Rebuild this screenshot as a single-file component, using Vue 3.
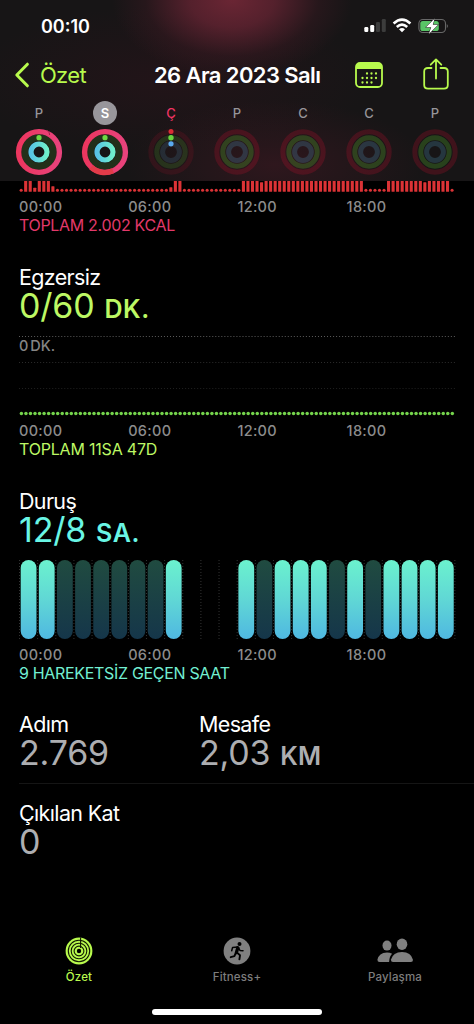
<template>
  <div class="screen">
    <header class="header">
      <div class="status">
        <span class="clock">00:10</span>
        <svg class="status-icons" width="86" height="20" viewBox="0 0 86 20">
          <rect x="0.3" y="11" width="4" height="5" rx="1.2" fill="#fff" />
          <rect x="6.2" y="9" width="4" height="7" rx="1.2" fill="#fff" />
          <rect x="12" y="6" width="4" height="10" rx="1.2" fill="#3c3c3c" />
          <rect x="17.8" y="3" width="4" height="13" rx="1.2" fill="#3c3c3c" />
          <g fill="none" stroke="#fff" stroke-width="2.6">
            <path d="M29.6 7.5 Q38 -0.2 46.4 7.5" />
            <path d="M32.8 11 Q38 6.3 43.2 11" />
          </g>
          <path d="M35 13.2 Q38 10.6 41 13.2 L38 16.2 Z" fill="#fff" />
          <rect x="54.9" y="3.5" width="26.6" height="13" rx="4" fill="none" stroke="#686868" stroke-width="1.1" />
          <path d="M82.8 7.9 Q84.7 10 82.8 12.1 Z" fill="#777" />
          <rect x="56.3" y="5" width="18.5" height="10" rx="2.6" fill="#59c466" />
          <path d="M70.7 2.5 L61.8 11.2 H67.2 L64.8 18 L74.2 8.8 H68.8 Z" fill="#fff" stroke="#1b1b1b" stroke-width="1" paint-order="stroke" />
        </svg>
      </div>

      <nav class="nav">
        <div class="back">
          <svg width="16" height="26" viewBox="0 0 16 26">
            <path d="M13.4 2.2 L2.8 13 L13.4 23.8" fill="none" stroke="#b8fa4d" stroke-width="3" stroke-linecap="round" stroke-linejoin="round" />
          </svg>
          <span>Özet</span>
        </div>
        <h1>26 Ara 2023 Salı</h1>
        <svg class="calendar" width="28" height="26" viewBox="0 0 28 26">
          <rect x="1" y="1" width="26" height="24" rx="4" fill="none" stroke="#b8fa4d" stroke-width="1.8" />
          <path d="M1 7 V5 Q1 1 5 1 H23 Q27 1 27 5 V7 Z" fill="#b8fa4d" />
          <circle v-for="d in calendarDots" :key="d.join()" :cx="d[0]" :cy="d[1]" r="1.15" fill="#b8fa4d" />
        </svg>
        <svg class="share" width="26" height="32" viewBox="0 0 26 32" fill="none" stroke="#b8fa4d" stroke-width="1.8" stroke-linecap="round" stroke-linejoin="round">
          <path d="M8.5 10 H5 Q1.2 10 1.2 13.6 V27 Q1.2 30.6 5 30.6 H21 Q24.8 30.6 24.8 27 V13.6 Q24.8 10 21 10 H17.5" />
          <path d="M13 20.5 V1.5 M7.7 6.7 L13 1.4 L18.3 6.7" />
        </svg>
      </nav>

      <div class="week">
        <div v-for="(day, i) in days" :key="i" class="day">
          <span :class="['day-name', day.state]">{{ day.name }}</span>
          <svg width="48" height="48" viewBox="-24 -24 48 48" fill="none">
            <defs>
              <linearGradient id="move" x1="0" y1="0" x2="1" y2="0">
                <stop offset="0" stop-color="#ec365f" />
                <stop offset="1" stop-color="#e8437c" />
              </linearGradient>
              <linearGradient id="stand" x1="0" y1="0" x2="1" y2="0">
                <stop offset="0" stop-color="#58c4e4" />
                <stop offset="1" stop-color="#6ff0cb" />
              </linearGradient>
            </defs>
            <template v-if="day.done">
              <circle r="14.3" stroke="#22301a" stroke-width="6.8" />
              <circle r="20.4" stroke="url(#move)" stroke-width="5.4" />
              <path v-if="i === 0" d="M8 -21.6 Q11 -20 10.6 -17" stroke="#9e2447" stroke-width="1" />
              <path v-else d="M-14 15.3 A20.4 20.4 0 0 0 8 18.8" stroke="#e23b49" stroke-width="5.4" />
              <circle r="8" stroke="url(#stand)" stroke-width="5.2" />
              <circle cy="-14.3" r="2.6" fill="#6fd944" />
            </template>
            <g v-else>
              <circle r="20.2" stroke="#e01030" stroke-width="5" :opacity="i === 2 ? 0.12 : 0.2" />
              <circle r="14.2" stroke="#51a82c" stroke-width="5" :opacity="i === 2 ? 0.2 : 0.3" />
              <circle r="8.4" stroke="#4d8dab" stroke-width="5" :opacity="i === 2 ? 0.2 : 0.28" />
              <template v-if="day.state === 'today'">
                <circle cy="-20.5" r="2.5" fill="#d92d35" />
                <circle cy="-14.3" r="2.7" fill="#69d43f" />
                <circle cy="-8.2" r="2.6" fill="#5aaaf0" />
              </template>
            </g>
          </svg>
        </div>
      </div>
    </header>

    <main class="content">
      <section class="move">
        <svg class="move-chart" width="436" height="11" viewBox="0 0 436 11">
          <rect v-for="(h, i) in moveBars" :key="i" :x="0.6 + i * 4.536" :y="10.8 - h" width="3.1" :height="h" :rx="h < 4 ? 1.5 : 0.5" fill="#dc3336" />
        </svg>
        <div class="hours"><span v-for="t in hours" :key="t">{{ t }}</span></div>
        <p class="total">TOPLAM 2.002 KCAL</p>
      </section>

      <section class="exercise">
        <h2>Egzersiz</h2>
        <p class="value"><span class="num">0/60</span> <small>DK.</small></p>
        <div class="chart">
          <svg width="440" height="84" viewBox="0 0 440 84">
            <g stroke-width="1" stroke-dasharray="1 2.02">
              <path d="M0 4.5 H437" stroke="#5c5c5c" />
              <path d="M0 30.5 H437" stroke="#2c2c2c" />
              <path d="M0 56.5 H437" stroke="#202020" />
            </g>
            <circle v-for="i in 96" :key="i" :cx="2.4 + (i - 1) * 4.536" cy="81.4" r="1.75" fill="#75d44c" />
          </svg>
          <span class="axis">0 DK.</span>
        </div>
        <div class="hours"><span v-for="t in hours" :key="t">{{ t }}</span></div>
        <p class="total">TOPLAM 11SA 47D</p>
      </section>

      <section class="stand">
        <h2>Duruş</h2>
        <p class="value"><span class="num">12/8</span> <small>SA.</small></p>
        <svg class="stand-chart" width="440" height="80" viewBox="0 0 440 80">
          <defs>
            <linearGradient id="bar-on" x1="0" y1="0" x2="0" y2="1">
              <stop offset="0" stop-color="#6bf2ce" />
              <stop offset="0.5" stop-color="#60d7d5" />
              <stop offset="1" stop-color="#4fb8e1" />
            </linearGradient>
            <linearGradient id="bar-off" x1="0" y1="0" x2="0" y2="1">
              <stop offset="0" stop-color="#204b40" />
              <stop offset="1" stop-color="#15364a" />
            </linearGradient>
          </defs>
          <path v-for="i in 25" :key="'l' + i" :d="`M${1.5 + (i - 1) * 18.14} 0 V79`" stroke="#343434" stroke-width="1" stroke-dasharray="1 2" />
          <template v-for="(bar, i) in standBars" :key="i">
            <rect v-if="bar !== '-'" :x="2.7 + i * 18.14" y="0" width="15.8" height="79" rx="7.9" :fill="bar === '1' ? 'url(#bar-on)' : 'url(#bar-off)'" />
          </template>
        </svg>
        <div class="hours"><span v-for="t in hours" :key="t">{{ t }}</span></div>
        <p class="total">9 HAREKETSİZ GEÇEN SAAT</p>
      </section>

      <section class="stats">
        <div class="stat">
          <h2>Adım</h2>
          <p class="value"><span class="num">2.769</span></p>
        </div>
        <div class="stat">
          <h2>Mesafe</h2>
          <p class="value"><span class="num">2,03</span> <small>KM</small></p>
        </div>
      </section>
      <section class="stats floors">
        <div class="stat">
          <h2>Çıkılan Kat</h2>
          <p class="value"><span class="num">0</span></p>
        </div>
      </section>
    </main>

    <footer class="tabs">
      <div class="tab active">
        <svg width="28" height="28" viewBox="-14 -14 28 28">
          <circle r="13.4" fill="#b8fa4d" />
          <g fill="none" stroke="#101800" stroke-width="1.1">
            <circle r="10.7" />
            <circle r="7.8" />
            <circle r="4.9" />
            <path d="M1.6 -13.4 V-3" />
          </g>
          <circle r="2.2" fill="#000" />
        </svg>
        <span>Özet</span>
      </div>
      <div class="tab">
        <svg width="28" height="28" viewBox="-14 -14 28 28">
          <circle r="13.4" fill="#808080" />
          <circle cx="2.5" cy="-7.1" r="2" fill="#000" />
          <g fill="none" stroke="#000" stroke-linecap="round" stroke-linejoin="round">
            <path d="M0.8 -3.2 L-0.6 1.6" stroke-width="3.3" />
            <path d="M0.6 -4 L-4.4 -3.6 L-5.3 -0.2 M1.6 -3.2 L3 -0.5 L6 -0.2" stroke-width="1.5" />
            <path d="M0 1.6 L3 4.3 L2.4 8.4 M-1.2 2 L-2.6 5.2 L-6.3 6.2" stroke-width="1.9" />
          </g>
        </svg>
        <span>Fitness+</span>
      </div>
      <div class="tab">
        <svg width="36" height="28" viewBox="0 0 36 28" fill="#808080">
          <ellipse cx="10" cy="8.6" rx="4.5" ry="5" />
          <path d="M2.6 25 Q0.4 25 0.4 22.8 Q1.8 15.6 10 15.4 Q13 15.4 15.1 16.8 Q12.4 19.2 12.1 25 Z" />
          <ellipse cx="25" cy="7.2" rx="5.3" ry="5.7" />
          <path d="M16 25 Q13.9 25 13.9 22.8 Q16 15 25 15 Q34 15 36 22.8 Q36 25 33.9 25 Z" />
        </svg>
        <span>Paylaşma</span>
      </div>
    </footer>
    <div class="home-indicator"></div>
  </div>
</template>

<script setup>
const hours = ['00:00', '06:00', '12:00', '18:00'];

const days = [
  { name: 'P', done: true },
  { name: 'S', done: true, state: 'selected' },
  { name: 'Ç', state: 'today' },
  { name: 'P' },
  { name: 'C' },
  { name: 'C' },
  { name: 'P' }
];

const calendarDots = [
  [12, 11.5], [16.5, 11.5], [21, 11.5],
  [7.5, 16], [12, 16], [16.5, 16], [21, 16],
  [7.5, 20.5], [12, 20.5], [16.5, 20.5]
];

// one bar per quarter of an hour, idle quarters are drawn as a dot
const moveBars = Array.from({ length: 96 }, (_, i) => {
  if (i === 3) return 4;
  if (i === 7) return 5.5;
  if (i === 33) return 4.5;
  if (i === 53 || i === 89) return 9.5;
  const active = i === 1 || i === 2 || (i >= 4 && i <= 6) || i === 34 || i === 35
    || (i >= 49 && i <= 75) || (i >= 81 && i <= 94);
  return active ? 11 : 3.1;
});

// 1 = stood, 0 = idle, - = no data
const standBars = '110000001---101110101111'.split('');
</script>

<style>
body {
  background: #000;
}
</style>

<style scoped>
.screen {
  display: flex;
  flex-direction: column;
  width: 474px;
  height: 1024px;
  overflow: hidden;
  background: #000;
  color: #fff;
  font-family: Inter, "Liberation Sans", sans-serif;
}

h1,
h2,
p {
  margin: 0;
  font-weight: 400;
}

svg {
  display: block;
  flex: none;
}

.header {
  flex: none;
  height: 181px;
  background:
    radial-gradient(ellipse 120px 78px at 232px 0, rgba(118, 40, 56, 0.88) 0%, rgba(108, 37, 53, 0.72) 35%, rgba(75, 28, 40, 0.3) 72%, transparent 100%),
    radial-gradient(ellipse 150px 65px at 275px 165px, rgba(75, 25, 38, 0.45), transparent),
    radial-gradient(ellipse 200px 75px at 170px 80px, rgba(60, 18, 30, 0.3), transparent),
    #171516;
}

.status {
  display: flex;
  justify-content: space-between;
  align-items: center;
  height: 50px;
  padding: 2px 24px 0 41px;
  box-sizing: border-box;
}

.clock {
  font-size: 18px;
  font-weight: 600;
}

.nav {
  display: flex;
  align-items: center;
  height: 50px;
  padding: 0 25px 0 14px;
}

.back {
  display: flex;
  align-items: center;
  gap: 10px;
  width: 140px;
  color: #b8fa4d;
  font-size: 22px;
  letter-spacing: -0.7px;
}

.nav h1 {
  width: 201px;
  font-size: 22px;
  font-weight: 600;
  letter-spacing: -0.6px;
  white-space: nowrap;
}

.share {
  margin: 0 0 2px auto;
}

.week {
  display: grid;
  grid-template-columns: repeat(7, 66px);
  padding: 1px 6px 0;
}

.day {
  display: flex;
  flex-direction: column;
  align-items: center;
  gap: 3px;
}

.day-name {
  width: 24px;
  height: 24px;
  border-radius: 50%;
  color: #97959a;
  font-size: 13px;
  font-weight: 500;
  line-height: 24px;
  text-align: center;
}

.day-name.selected {
  background: #98969b;
  color: #fff;
  font-weight: 600;
}

.day-name.today {
  color: #ef3464;
}

.content {
  flex: 1;
  padding-left: 19px;
}

.hours {
  display: grid;
  grid-template-columns: repeat(4, 109.2px);
  color: #8c8c8c;
  font-size: 14.5px;
  font-weight: 500;
  line-height: 18px;
  letter-spacing: 0.3px;
}

.total {
  margin-top: -1px;
  padding-bottom: 1px;
  font-size: 16px;
  line-height: 20px;
  letter-spacing: -0.32px;
}

h2 {
  font-size: 21.5px;
  line-height: 24px;
  letter-spacing: -0.65px;
}

.value {
  display: flex;
  align-items: baseline;
  gap: 10px;
  height: 34px;
  font-size: 34px;
  line-height: 34px;
  letter-spacing: -0.2px;
}

.value small {
  font-size: 25px;
  font-weight: 600;
  letter-spacing: 0.6px;
}

.move .hours {
  margin-top: 6px;
}

.move .total {
  color: #e3396a;
}

.exercise {
  margin-top: 29px;
}

.exercise .total {
  letter-spacing: -0.2px;
}

.exercise .value,
.exercise .total {
  color: #bdf864;
}

.chart {
  position: relative;
  margin-top: 9px;
}

.axis {
  position: absolute;
  top: 5px;
  left: 0;
  color: #858585;
  font-size: 14.5px;
  font-weight: 500;
  line-height: 18px;
  word-spacing: -2px;
}

.exercise .hours {
  margin-top: 6px;
}

.stand {
  margin-top: 29px;
}

.stand .value {
  color: #69f6e5;
}

.stand .total {
  color: #72efd2;
}

.stand-chart {
  margin: 13px 0 6px -1px;
}

.stats {
  display: grid;
  grid-template-columns: 180px 1fr;
  margin-top: 28px;
}

.stats .value {
  color: #adaeb1;
}

.stats .value small {
  letter-spacing: 0;
}

.floors {
  margin-top: 13px;
  padding-top: 17px;
  border-top: 1px solid #151515;
}

.tabs {
  display: grid;
  grid-template-columns: repeat(3, 158px);
  height: 72px;
  flex: none;
}

.tab {
  display: flex;
  flex-direction: column;
  align-items: center;
  gap: 4px;
  color: #7d7d7d;
  font-size: 11.5px;
  font-weight: 500;
  line-height: 16px;
  letter-spacing: 0.15px;
}

.tab.active {
  color: #b8fa4d;
}

.home-indicator {
  flex: none;
  width: 170px;
  height: 6px;
  margin: 0 auto 9px;
  border-radius: 3px;
  background: #fff;
}
</style>
